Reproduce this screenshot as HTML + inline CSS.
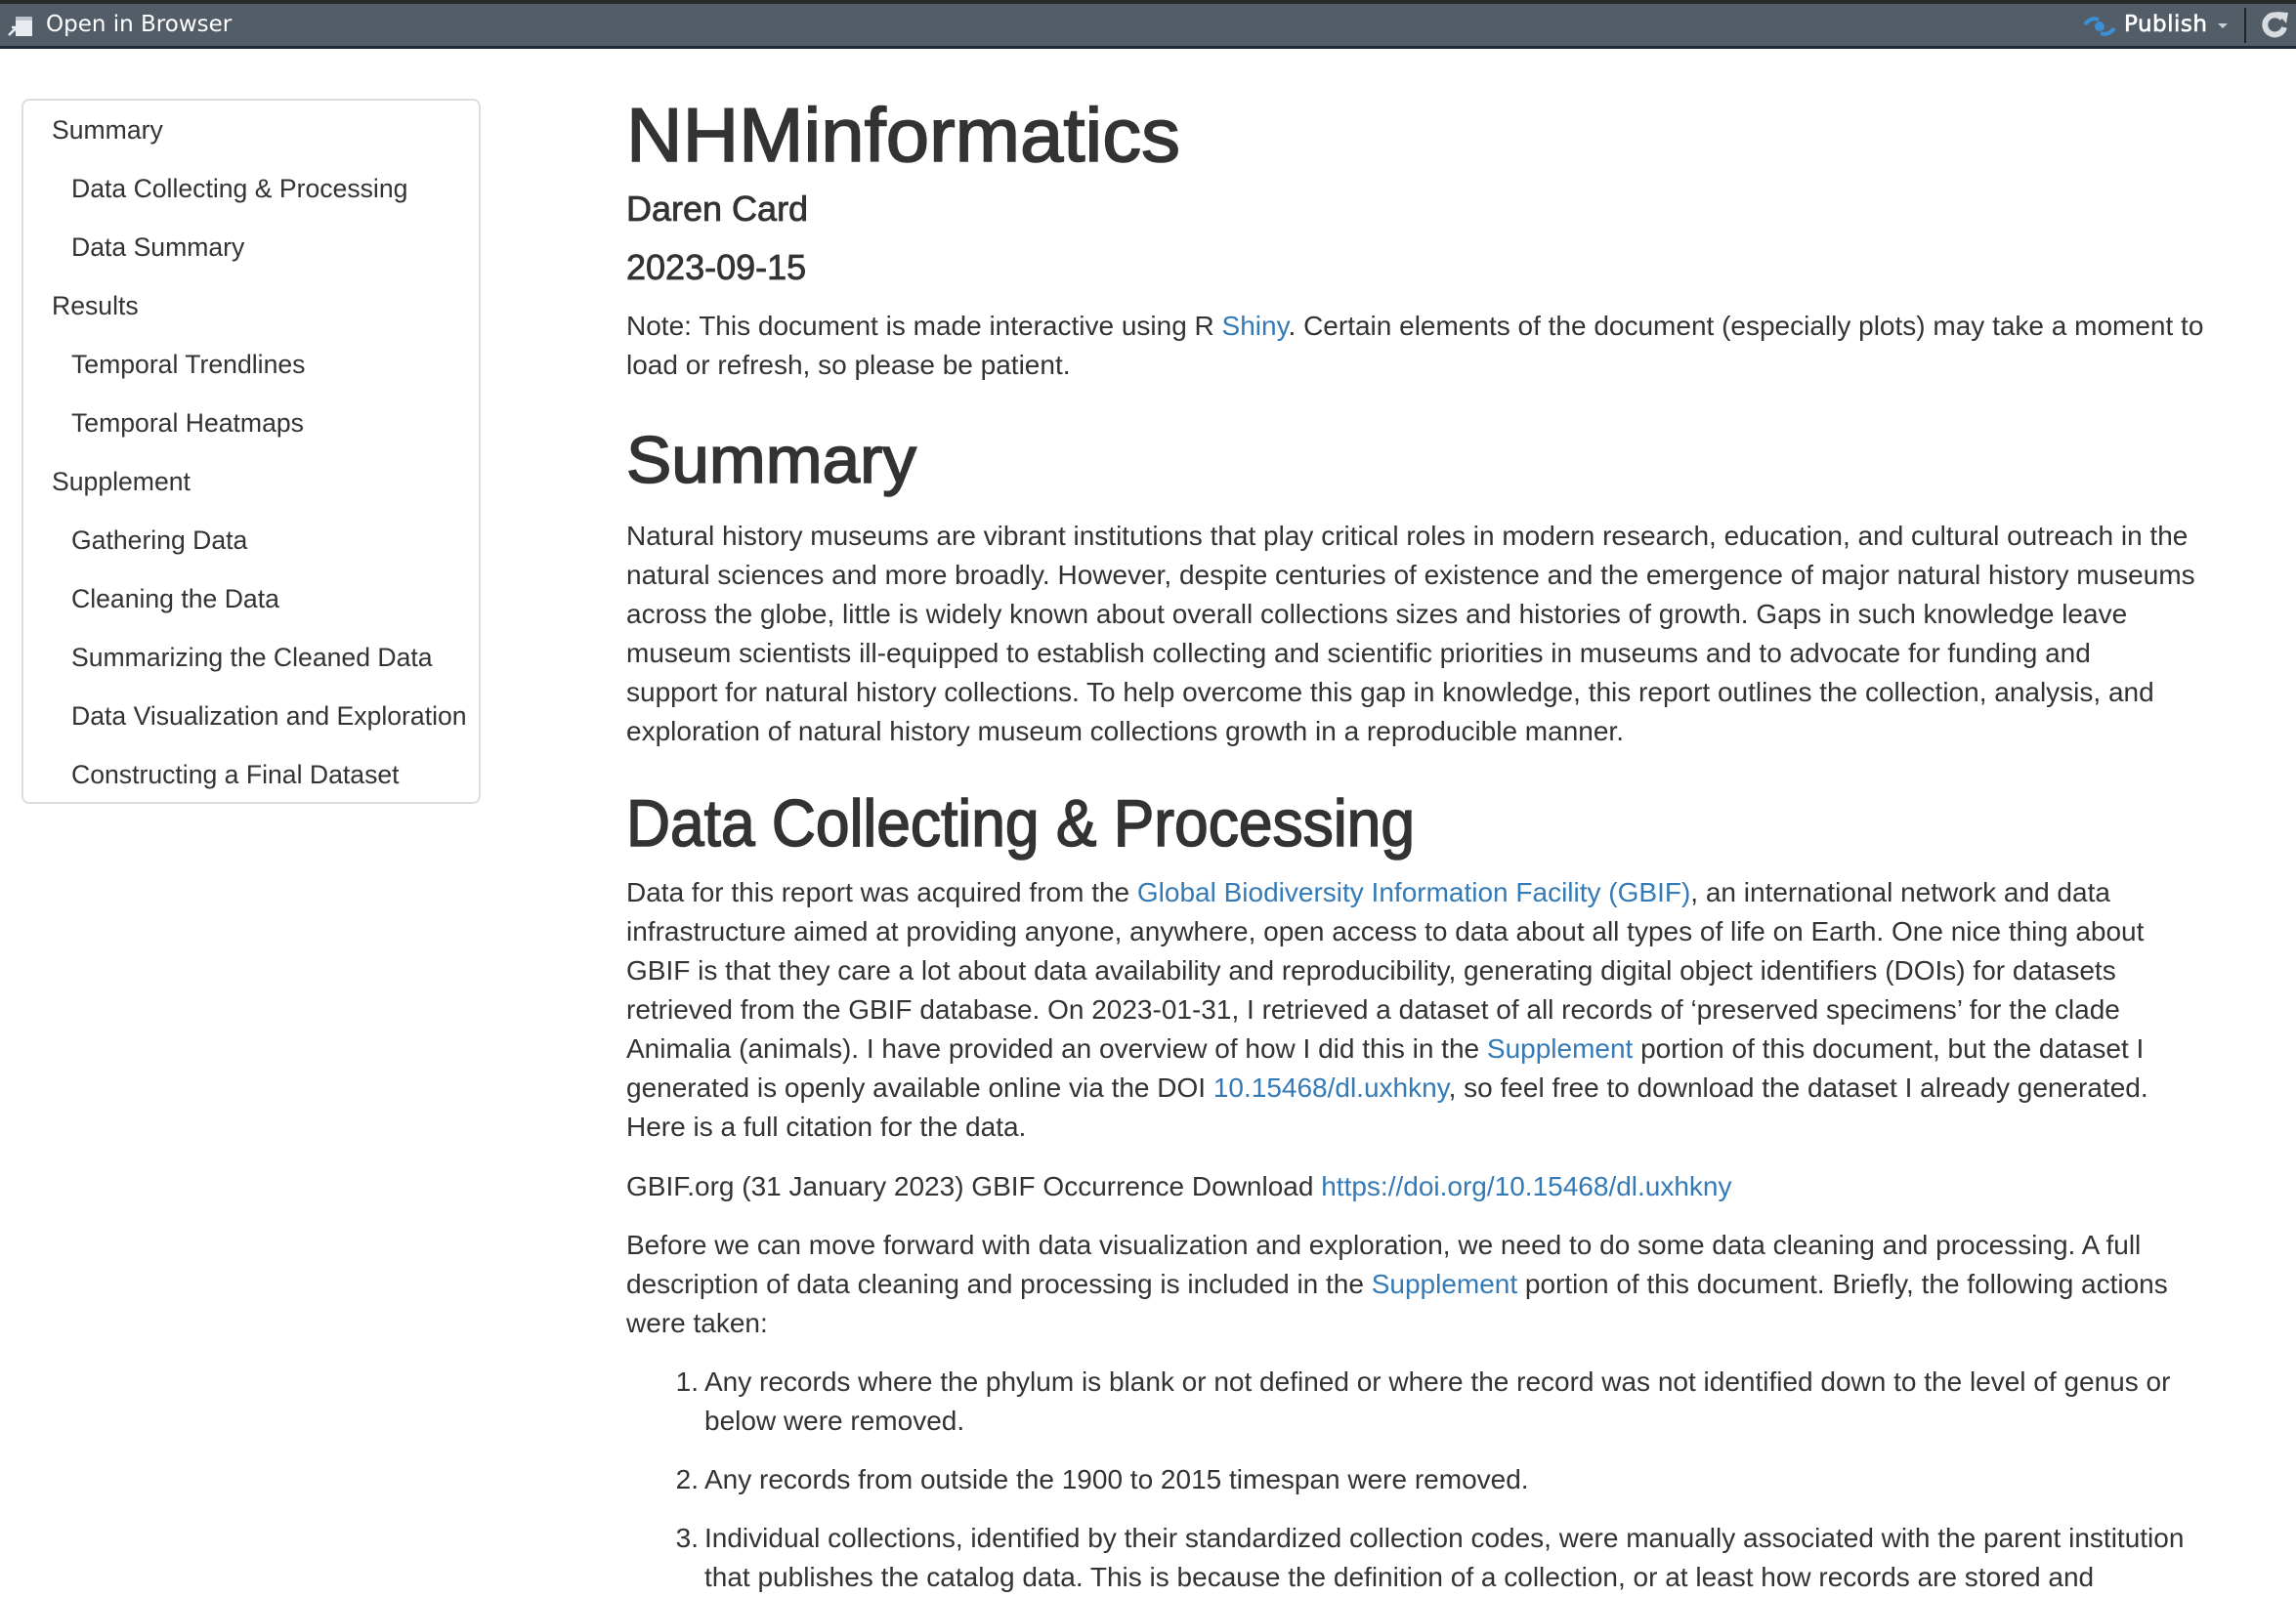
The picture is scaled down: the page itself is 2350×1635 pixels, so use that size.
<!DOCTYPE html>
<html><head><meta charset="utf-8"><style>
*{margin:0;padding:0;box-sizing:border-box}
body{width:2350px;height:1629px;overflow:hidden;background:#fff;font-family:"Liberation Sans",Arial,sans-serif;color:#333;position:relative}
.bar{position:absolute;left:0;top:0;width:2350px;height:50px;background:#535d68;border-top:4px solid #2a2a2a;border-bottom:3px solid #1d2a3a}
.bar .t{position:absolute;top:8px;font-size:23px;color:#fff;font-family:"DejaVu Sans","Liberation Sans",sans-serif}
.side{position:absolute;left:22px;top:101px;width:470px;height:722px;border:2px solid #ddd;border-radius:8px}
.si{position:absolute;font-size:26.6px;line-height:40px;white-space:nowrap}
.l{position:absolute;left:641px;font-size:28px;line-height:40px;white-space:nowrap}
a{color:#337ab7;text-decoration:none}
.h4{font-size:36px;line-height:40px;-webkit-text-stroke:0.8px #333}
.num{position:absolute;left:-50px;width:44px;text-align:right}
svg.h{position:absolute;left:641px}
svg.h text{font-family:"Liberation Sans",Arial,sans-serif;font-weight:normal;fill:#333;stroke:#333;stroke-width:1.6px}
</style></head><body>
<div class="bar">
<svg style="position:absolute;left:7px;top:10px" width="28" height="26" viewBox="0 0 28 26"><rect x="9" y="3" width="17" height="20" fill="#e8ecf0"/><rect x="9" y="3" width="17" height="4" fill="#b9c4cf"/><path d="M2 22 L10 14 M5 14 H10 V19" stroke="#e8ecf0" stroke-width="2.5" fill="none"/></svg>
<div class="t" style="left:47px">Open in Browser</div>
<svg style="position:absolute;left:2132px;top:11px" width="34" height="24" viewBox="0 0 34 24"><path d="M2 10 Q8 2 16 5" stroke="#3a8fd6" stroke-width="4" fill="none"/><path d="M32 14 Q26 22 18 19" stroke="#3a8fd6" stroke-width="4" fill="none"/><circle cx="17" cy="12" r="5" fill="#3a8fd6"/></svg>
<div class="t" style="left:2174px;-webkit-text-stroke:0.6px #fff;letter-spacing:0.5px">Publish</div>
<div style="position:absolute;left:2270px;top:20px;border:5px solid transparent;border-top:5px solid #c8cdd3"></div>
<div style="position:absolute;left:2297px;top:4px;width:2px;height:36px;background:#222"></div>
<svg style="position:absolute;left:2313px;top:5px" width="30" height="32" viewBox="0 0 30 32"><path d="M23 10 A10 10 0 1 0 25 19" stroke="#d8dce0" stroke-width="6" fill="none"/><path d="M17 3 L29 4 L27 15 Z" fill="#d8dce0"/></svg>
</div>

<div class="side"></div>
<div class="si" style="left:53px;top:113px">Summary</div>
<div class="si" style="left:73px;top:173px">Data Collecting &amp; Processing</div>
<div class="si" style="left:73px;top:233px">Data Summary</div>
<div class="si" style="left:53px;top:293px">Results</div>
<div class="si" style="left:73px;top:353px">Temporal Trendlines</div>
<div class="si" style="left:73px;top:413px">Temporal Heatmaps</div>
<div class="si" style="left:53px;top:473px">Supplement</div>
<div class="si" style="left:73px;top:533px">Gathering Data</div>
<div class="si" style="left:73px;top:593px">Cleaning the Data</div>
<div class="si" style="left:73px;top:653px">Summarizing the Cleaned Data</div>
<div class="si" style="left:73px;top:713px">Data Visualization and Exploration</div>
<div class="si" style="left:73px;top:773px">Constructing a Final Dataset</div>

<svg class="h" style="top:95px" width="620" height="90"><text x="0" y="70" font-size="78" textLength="567" lengthAdjust="spacingAndGlyphs">NHMinformatics</text></svg>
<div class="l h4" style="top:194px">Daren Card</div>
<div class="l h4" style="top:254px">2023-09-15</div>
<div class="l" style="top:314px">Note: This document is made interactive using R <a>Shiny</a>. Certain elements of the document (especially plots) may take a moment to<br>load or refresh, so please be patient.</div>

<svg class="h" style="top:427px" width="340" height="90"><text x="0" y="67" font-size="68" textLength="297" lengthAdjust="spacingAndGlyphs">Summary</text></svg>
<div class="l" style="top:529px">Natural history museums are vibrant institutions that play critical roles in modern research, education, and cultural outreach in the<br>natural sciences and more broadly. However, despite centuries of existence and the emergence of major natural history museums<br>across the globe, little is widely known about overall collections sizes and histories of growth. Gaps in such knowledge leave<br>museum scientists ill-equipped to establish collecting and scientific priorities in museums and to advocate for funding and<br>support for natural history collections. To help overcome this gap in knowledge, this report outlines the collection, analysis, and<br>exploration of natural history museum collections growth in a reproducible manner.</div>

<svg class="h" style="top:799px" width="860" height="90"><text x="0" y="67" font-size="68" textLength="807" lengthAdjust="spacingAndGlyphs">Data Collecting &amp; Processing</text></svg>
<div class="l" style="top:894px">Data for this report was acquired from the <a>Global Biodiversity Information Facility (GBIF)</a>, an international network and data<br>infrastructure aimed at providing anyone, anywhere, open access to data about all types of life on Earth. One nice thing about<br>GBIF is that they care a lot about data availability and reproducibility, generating digital object identifiers (DOIs) for datasets<br>retrieved from the GBIF database. On 2023-01-31, I retrieved a dataset of all records of ‘preserved specimens’ for the clade<br>Animalia (animals). I have provided an overview of how I did this in the <a>Supplement</a> portion of this document, but the dataset I<br>generated is openly available online via the DOI <a>10.15468/dl.uxhkny</a>, so feel free to download the dataset I already generated.<br>Here is a full citation for the data.</div>
<div class="l" style="top:1195px">GBIF.org (31 January 2023) GBIF Occurrence Download <a>https://doi.org/10.15468/dl.uxhkny</a></div>
<div class="l" style="top:1255px">Before we can move forward with data visualization and exploration, we need to do some data cleaning and processing. A full<br>description of data cleaning and processing is included in the <a>Supplement</a> portion of this document. Briefly, the following actions<br>were taken:</div>
<div class="l" style="left:721px;top:1395px"><span class="num">1.</span>Any records where the phylum is blank or not defined or where the record was not identified down to the level of genus or<br>below were removed.</div>
<div class="l" style="left:721px;top:1495px"><span class="num">2.</span>Any records from outside the 1900 to 2015 timespan were removed.</div>
<div class="l" style="left:721px;top:1555px"><span class="num">3.</span>Individual collections, identified by their standardized collection codes, were manually associated with the parent institution<br>that publishes the catalog data. This is because the definition of a collection, or at least how records are stored and</div>
</body></html>
